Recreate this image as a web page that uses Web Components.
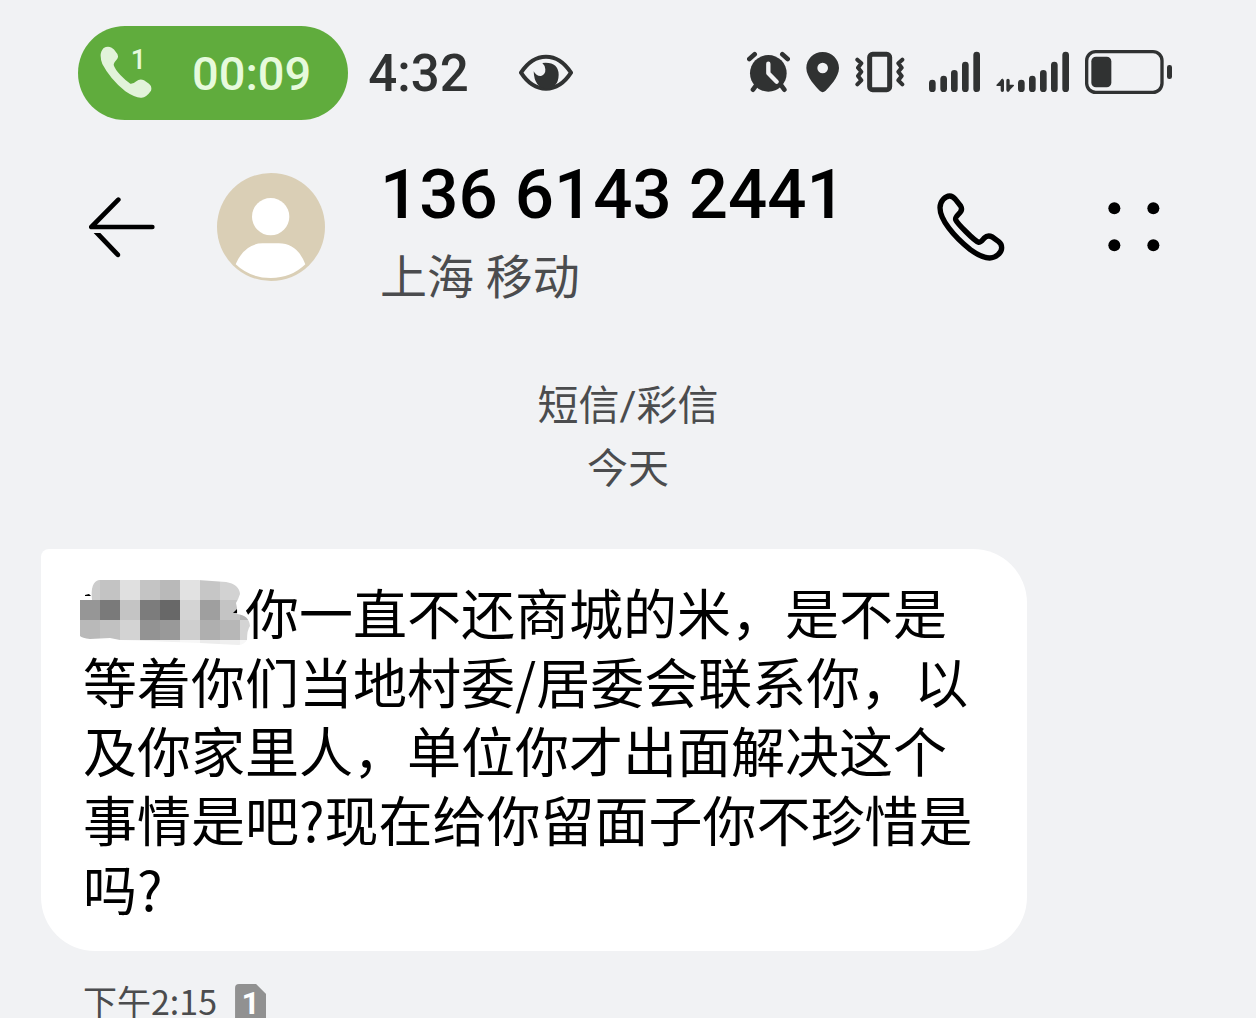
<!DOCTYPE html>
<html lang="zh-CN">
<head>
<meta charset="utf-8">
<meta name="viewport" content="width=device-width, initial-scale=1">
<title>短信</title>
<style>
    body {
        margin: 0;
        background: #f1f2f4;
        color: #000;
        font-family: Roboto, "Noto Sans CJK SC", sans-serif;
    }
</style>
</head>
<body>

<sms-screen>
    <status-bar slot="status" time="4:32">
        <call-pill slot="call" line="1">00:09</call-pill>
    </status-bar>
    <chat-header slot="header">
        136 6143 2441
        <span slot="region">上海 移动</span>
    </chat-header>
    <date-label>
        短信/彩信
        <span slot="day">今天</span>
    </date-label>
    <message-bubble sim="1">
        <masked-name></masked-name>你一直不还商城的米，是不是等着你们当地村委/居委会联系你，以及你家里人，单位你才出面解决这个事情是吧?现在给你留面子你不珍惜是吗?
        <time slot="time" datetime="14:15">下午2:15</time>
    </message-bubble>
</sms-screen>

<script>
// name: [width, height, viewBox, markup]
const ICONS = {
    call: [54, 54, '89 96 162 162', `
        <path fill="#e2f3da" d="M100 102Q112 95 124 101Q132 106 136 113Q147 124 141 134Q130 146 130 153Q134 166 150 183Q166 200 180 209Q190 210 198 202Q208 193 221 199L236 209Q246 217 242 230Q228 250 214 251Q196 253 165 232Q120 196 96 150Q84 118 100 102Z"/>`],
    eye: [54, 38, '474 70 162 114', `
        <path fill="none" stroke="#303232" stroke-width="12" stroke-linejoin="round" d="M480 126Q511 78 555 78Q599 78 630 126Q599 174 555 174Q511 174 480 126Z"/>
        <path fill="#303232" d="M544 97Q592 92 593 132Q592 172 556 173Q520 172 518 122Q526 137 540 136Q554 132 553 116Q552 104 544 97Z"/>`],
    alarm: [43, 46, '39 45 129 138', `
        <circle cx="103" cy="115" r="55" fill="#303232"/>
        <path fill="none" stroke="#303232" stroke-width="14" stroke-linecap="round" d="M46 72L62 58M145 58L161 72M68 149L57 164M140 149L151 164"/>
        <path fill="none" stroke="#f1f2f4" stroke-width="13" stroke-linecap="round" stroke-linejoin="round" d="M103 86V115L128 140"/>`],
    pin: [33, 46, '216 45 99 138', `
        <path fill="#303232" fill-rule="evenodd" d="M266 51C294 51 315 73 315 99C315 126 286 156 274 168Q266 175 258 168C246 156 217 126 217 99C217 73 238 51 266 51ZM266 83A16 16 0 1 0 266 115A16 16 0 1 0 266 83Z"/>`],
    vibrate: [50, 46, '362 45 150 138', `
        <rect x="406" y="58" width="60" height="106" rx="9" fill="none" stroke="#303232" stroke-width="15"/>
        <path fill="none" stroke="#303232" stroke-width="12" stroke-linecap="round" stroke-linejoin="round" d="M369 74L381 85L371 98L381 110L371 123L381 136L369 148M504 74L492 85L502 98L492 110L502 123L492 136L504 148"/>`],
    signal: [51, 46, '583 45 153 138', `
        <path stroke="#303232" stroke-width="20" stroke-linecap="round" d="M593 144V161M627 132V161M659 115V161M692 90V161M726 60V161"/>`],
    data: [73, 46, '48 45 219 138', `
        <path stroke="#303232" stroke-width="20" stroke-linecap="round" d="M124 144V161M157 132V161M190 115V161M223 90V161M257 60V161"/>
        <path fill="none" stroke="#303232" stroke-width="10" stroke-linecap="round" d="M67 166V137M84 136V165"/>
        <path fill="#303232" d="M68 130L49 150Q48 153 52 153H68ZM83 172L102 152Q103 149 99 149H83Z"/>`],
    battery: [87, 46, '315 45 261 138', `
        <rect x="320" y="50" width="226" height="122" rx="27" fill="none" stroke="#303232" stroke-width="10"/>
        <rect x="334" y="65" width="60" height="92" rx="14" fill="#303232"/>
        <rect x="561" y="90" width="15" height="42" rx="7" fill="#303232"/>`],
    back: [66, 62, '57 140 198 186', `
        <path fill="none" stroke="#000" stroke-width="14" stroke-linecap="round" stroke-linejoin="round" d="M145 151L64 233H247"/>
        <path d="M71 251H91L149 312Q153 318 148 322Q143 326 138 321Z"/>`],
    avatar: [108, 108, '441 68 324 324', `
        <circle cx="603" cy="230" r="162" fill="#dacfb6"/>
        <circle cx="602" cy="199" r="56" fill="#fff"/>
        <path fill="#fff" d="M497 342Q524 279 578 279H626Q682 279 706 342Q664 383 602 383Q540 383 497 342Z"/>`],
    dial: [68, 68, '50 70 204 204', `
        <path fill="none" stroke="#000" stroke-width="16" stroke-linejoin="round" d="M88 79C74 79 59 96 59 114C59 150 100 200 150 240C175 258 195 265 208 265C226 265 244 250 244 234C244 225 240 220 235 216L216 202C206 197 198 199 192 205C186 211 182 218 175 218C160 212 110 160 106 150C104 144 108 140 114 134C124 126 126 118 121 109L106 90C100 82 96 79 88 79Z"/>`],
    more: [54, 50, '563 95 156 150', `
        <circle cx="582" cy="114" r="18"/><circle cx="699" cy="114" r="18"/>
        <circle cx="582" cy="225" r="18"/><circle cx="699" cy="225" r="18"/>`]
};

class UiIcon extends HTMLElement {
    constructor() {
        super();
        this.attachShadow({ mode: 'open' });
    }

    connectedCallback() {
        const [width, height, box, markup] = ICONS[this.getAttribute('name')];
        this.shadowRoot.innerHTML = `
            <style>
                :host {
                    display: block;
                    flex: none;
                }

                svg {
                    display: block;
                }
            </style>
            <svg width="${width}" height="${height}" viewBox="${box}" aria-hidden="true">${markup}</svg>
        `;
    }
}

customElements.define('ui-icon', UiIcon);

class CallPill extends HTMLElement {
    constructor() {
        super();
        this.attachShadow({ mode: 'open' });
        this.shadowRoot.innerHTML = `
            <style>
                :host {
                    display: flex;
                    align-items: center;
                    box-sizing: border-box;
                    height: 94px;
                    padding: 0 37px 0 22px;
                    border-radius: 47px;
                    background: #60ac3d;
                    color: #e6fadc;
                    font-size: 47px;
                    font-weight: 500;
                }

                #phone {
                    position: relative;
                    margin-right: 38px;
                }

                /* line number sits over the handset */
                #line {
                    position: absolute;
                    top: 0;
                    right: 8px;
                    font-size: 27px;
                    line-height: 28px;
                }
            </style>
            <div id="phone">
                <ui-icon name="call"></ui-icon>
                <span id="line"></span>
            </div>
            <slot></slot>
        `;
    }

    connectedCallback() {
        this.shadowRoot.querySelector('#line').textContent = this.getAttribute('line');
    }
}

customElements.define('call-pill', CallPill);

class StatusBar extends HTMLElement {
    constructor() {
        super();
        this.attachShadow({ mode: 'open' });
        this.shadowRoot.innerHTML = `
            <style>
                :host {
                    display: flex;
                    align-items: center;
                    padding: 26px 84px 0 78px;
                    color: #303232;
                }

                #time {
                    margin: 0 50px 0 20px;
                    font-size: 51px;
                    font-weight: 500;
                }

                #icons {
                    display: flex;
                    gap: 16px;
                    margin-left: auto;
                }

                .wide {
                    margin-left: 8px;
                }
            </style>
            <slot name="call"></slot>
            <span id="time"></span>
            <ui-icon name="eye"></ui-icon>
            <div id="icons">
                <ui-icon name="alarm"></ui-icon>
                <ui-icon name="pin"></ui-icon>
                <ui-icon name="vibrate"></ui-icon>
                <ui-icon name="signal" class="wide"></ui-icon>
                <ui-icon name="data"></ui-icon>
                <ui-icon name="battery"></ui-icon>
            </div>
        `;
    }

    connectedCallback() {
        this.shadowRoot.querySelector('#time').textContent = this.getAttribute('time');
    }
}

customElements.define('status-bar', StatusBar);

class ChatHeader extends HTMLElement {
    constructor() {
        super();
        this.attachShadow({ mode: 'open' });
        this.shadowRoot.innerHTML = `
            <style>
                :host {
                    display: flex;
                    align-items: center;
                    padding: 20px 95px 0 89px;
                }

                button {
                    flex: none;
                    padding: 0;
                    border: 0;
                    background: none;
                    cursor: pointer;
                }

                #avatar {
                    margin: 0 55px 0 62px;
                }

                #title {
                    flex: 1;
                    padding-top: 8px;
                }

                h1 {
                    margin: 0;
                    font-size: 69px;
                    font-weight: 500;
                    line-height: 94px;
                }

                p {
                    margin: 0;
                    color: #4b4c4e;
                    font-size: 47px;
                    line-height: 72px;
                }

                #more {
                    margin-left: 102px;
                }
            </style>
            <button id="back" aria-label="返回"><ui-icon name="back"></ui-icon></button>
            <ui-icon id="avatar" name="avatar"></ui-icon>
            <div id="title">
                <h1><slot></slot></h1>
                <p><slot name="region"></slot></p>
            </div>
            <button id="dial" aria-label="拨打电话"><ui-icon name="dial"></ui-icon></button>
            <button id="more" aria-label="更多"><ui-icon name="more"></ui-icon></button>
        `;
    }
}

customElements.define('chat-header', ChatHeader);

class DateLabel extends HTMLElement {
    constructor() {
        super();
        this.attachShadow({ mode: 'open' });
        this.shadowRoot.innerHTML = `
            <style>
                :host {
                    display: block;
                    padding: 61px 0 48px;
                    color: #4b4c4e;
                    font-size: 41px;
                    line-height: 63px;
                    text-align: center;
                }
            </style>
            <div><slot></slot></div>
            <div><slot name="day"></slot></div>
        `;
    }
}

customElements.define('date-label', DateLabel);

// pixelated block drawn in place of the three characters of a name
class MaskedName extends HTMLElement {
    constructor() {
        super();
        const rows = [
            ['#ccc', '#c3c3c3', '#e0e0e0', '#c4c4c4', '#b9b9b9', '#e2e2e2', '#c6c6c6', '#d2d2d2'],
            ['#969696', '#7a7a7a', '#c4c4c4', '#7c7c7c', '#686868', '#d4d4d4', '#9f9f9f', '#c4c4c4', '#b4b4b4'],
            ['#b9b9b9', '#c1c1c1', '#d3d3d3', '#939393', '#999', '#cfcfcf', '#afafaf', '#b7b7b7', '#d4d4d4'],
            ['#fff', '#fff', '#f4f4f4', '#f1f1f1', '#f1f1f1', '#f7f7f7', '#ececec', '#efefef', '#f7f7f7']
        ];
        const cells = rows.map((row, y) => row.map((color, x) =>
            `<rect x="${x * 20}" y="${y * 20}" width="20" height="20" fill="${color}"/>`
        ).join('')).join('');

        this.attachShadow({ mode: 'open' });
        this.shadowRoot.innerHTML = `
            <style>
                :host {
                    display: inline-block;
                    width: 3em;
                    height: 69px;
                    vertical-align: top;
                }

                svg {
                    display: block;
                    margin: 3px 0 0 -3px;
                    overflow: visible;
                }
            </style>
            <svg width="170" height="66" viewBox="0 0 170 66" aria-hidden="true">
                <clipPath id="brush">
                    <path d="M19 0H118L146 2Q159 4 160 14Q158 20 156 23Q158 32 157 34Q169 35 170 46Q167 50 167 60Q164 65 158 65L120 63L40 60L30 58L10 59Q2 58 0 56V20H12Q10 2 19 0Z"/>
                </clipPath>
                <g clip-path="url(#brush)" shape-rendering="crispEdges">${cells}</g>
                <path d="M5 15L9 14L11 16H5ZM153 33L157 29V33Z"/>
            </svg>
        `;
    }
}

customElements.define('masked-name', MaskedName);

class MessageBubble extends HTMLElement {
    constructor() {
        super();
        this.attachShadow({ mode: 'open' });
        this.shadowRoot.innerHTML = `
            <style>
                :host {
                    display: block;
                    padding: 0 41px;
                }

                #bubble {
                    box-sizing: border-box;
                    width: 84%;
                    padding: 28px 42px 29px;
                    border-radius: 8px 54px 54px 54px;
                    background: #fff;
                    font-family: "Noto Sans CJK SC", sans-serif;
                    font-size: 54px;
                    line-height: 69px;
                }

                #meta {
                    display: flex;
                    align-items: flex-start;
                    gap: 18px;
                    padding: 28px 42px 0;
                    color: #4b4c4e;
                    font-family: "Noto Sans CJK SC", sans-serif;
                    font-size: 34px;
                    line-height: 44px;
                }

                #sim {
                    width: 31px;
                    height: 40px;
                    margin-top: 5px;
                    border-radius: 4px;
                    background: #919191;
                    clip-path: polygon(0 0, 21px 0, 100% 10px, 100% 100%, 0 100%);
                    color: #fff;
                    font-family: Roboto, sans-serif;
                    font-size: 32px;
                    font-weight: 700;
                    line-height: 38px;
                    text-align: center;
                }
            </style>
            <div id="bubble"><slot></slot></div>
            <div id="meta">
                <slot name="time"></slot>
                <span id="sim"></span>
            </div>
        `;
    }

    connectedCallback() {
        this.shadowRoot.querySelector('#sim').textContent = this.getAttribute('sim');
    }
}

customElements.define('message-bubble', MessageBubble);

class SmsScreen extends HTMLElement {
    constructor() {
        super();
        this.attachShadow({ mode: 'open' });
        this.shadowRoot.innerHTML = `
            <style>
                :host {
                    display: flex;
                    flex-direction: column;
                    height: 100vh;
                }

                main {
                    flex: 1;
                    min-height: 0;
                    overflow-y: auto;
                    scrollbar-width: none;
                }
            </style>
            <slot name="status"></slot>
            <slot name="header"></slot>
            <main><slot></slot></main>
        `;
    }
}

customElements.define('sms-screen', SmsScreen);
</script>
</body>
</html>
